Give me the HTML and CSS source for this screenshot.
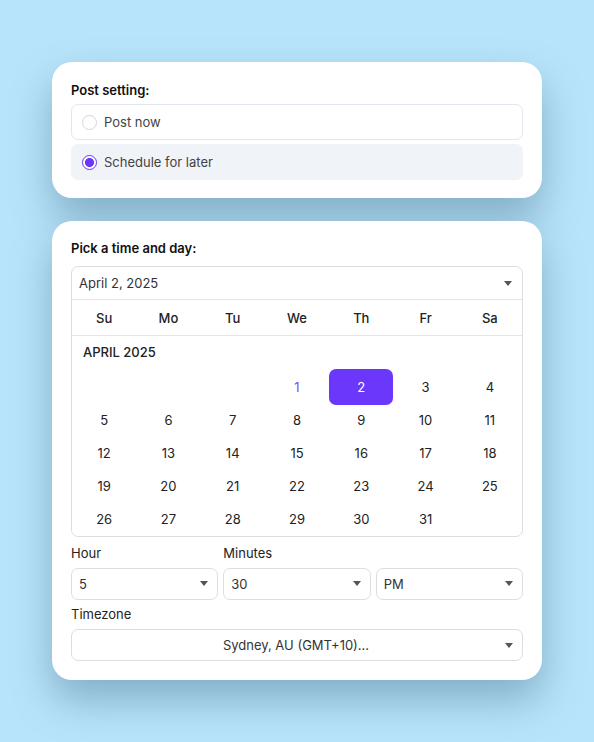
FILE: index.html
```html
<!DOCTYPE html>
<html>
<head>
<meta charset="utf-8">
<link rel="stylesheet" href="styles.css">
</head>
<body>
<div class="page">
  <section class="card card-post">
    <h2 class="title">Post setting:</h2>
    <div class="options">
      <div class="option">
        <span class="radio"></span>
        <span class="option-label">Post now</span>
      </div>
      <div class="option option-active">
        <span class="radio radio-on"></span>
        <span class="option-label">Schedule for later</span>
      </div>
    </div>
  </section>

  <section class="card card-time">
    <h2 class="title">Pick a time and day:</h2>
    <div class="picker">
      <div class="picker-head">
        <span>April 2, 2025</span>
        <span class="caret"></span>
      </div>
      <div class="weekdays">
        <span>Su</span><span>Mo</span><span>Tu</span><span>We</span><span>Th</span><span>Fr</span><span>Sa</span>
      </div>
      <div class="month">APRIL 2025</div>
      <div class="days">
        <span></span><span></span><span></span>
        <span class="day-first">1</span>
        <span class="day-selected">2</span>
        <span>3</span><span>4</span>
        <span>5</span><span>6</span><span>7</span><span>8</span><span>9</span><span>10</span><span>11</span>
        <span>12</span><span>13</span><span>14</span><span>15</span><span>16</span><span>17</span><span>18</span>
        <span>19</span><span>20</span><span>21</span><span>22</span><span>23</span><span>24</span><span>25</span>
        <span>26</span><span>27</span><span>28</span><span>29</span><span>30</span><span>31</span><span></span>
      </div>
    </div>

    <div class="time-grid">
      <div class="field">
        <label class="field-label">Hour</label>
        <div class="select"><span>5</span><span class="caret"></span></div>
      </div>
      <div class="field">
        <label class="field-label">Minutes</label>
        <div class="select"><span>30</span><span class="caret"></span></div>
      </div>
      <div class="field">
        <label class="field-label">&nbsp;</label>
        <div class="select"><span>PM</span><span class="caret"></span></div>
      </div>
    </div>

    <div class="field field-tz">
      <label class="field-label">Timezone</label>
      <div class="select select-center"><span class="tz-text">Sydney, AU (GMT+10)...</span><span class="caret"></span></div>
    </div>
  </section>
</div>
</body>
</html>
```

FILE: styles.css
```css
* { box-sizing: border-box; }
html, body {
  margin: 0;
  padding: 0;
}
body {
  background: #b8e4fb;
  font-family: Inter, "Noto Sans", sans-serif;
  color: #222;
  width: 594px;
  height: 742px;
  overflow: hidden;
}
.page {
  padding: 62px 0 0 52px;
  display: flex;
  flex-direction: column;
  gap: 23px;
}
.card {
  width: 490px;
  background: #fff;
  border-radius: 20px;
  padding: 20px 19px 18px 19px;
  box-shadow: 0 20px 40px rgba(30, 70, 100, 0.34);
}
.card-time {
  padding-top: 19px;
  padding-bottom: 19px;
}
.title {
  margin: 0;
  font-size: 13px;
  line-height: 16px;
  font-weight: 600;
  color: #111;
}
.options {
  margin-top: 6px;
  display: flex;
  flex-direction: column;
  gap: 4px;
}
.option {
  height: 36px;
  border: 1px solid #e2e6ee;
  border-radius: 7px;
  display: flex;
  align-items: center;
  padding-left: 10px;
  gap: 7px;
}
.option-active {
  background: #f0f3f8;
  border-color: #f0f3f8;
}
.option-label {
  font-size: 13px;
  color: #444;
}
.radio {
  width: 15px;
  height: 15px;
  border-radius: 50%;
  border: 1.5px solid #d4d6dc;
  background: #fff;
  flex: none;
}
.radio-on {
  border: 1.5px solid #6b38fb;
  background: radial-gradient(circle, #6b38fb 0 4.2px, #fff 4.8px);
}
.picker {
  margin-top: 10px;
  border: 1px solid #dedede;
  border-radius: 7px;
}
.picker-head {
  height: 33px;
  display: flex;
  align-items: center;
  justify-content: space-between;
  padding: 0 10px 0 7px;
  font-size: 13px;
  color: #333;
  border-bottom: 1px solid #e6e6e6;
}
.caret {
  width: 0;
  height: 0;
  border-left: 4.5px solid transparent;
  border-right: 4.5px solid transparent;
  border-top: 5px solid #555;
  flex: none;
}
.weekdays {
  height: 36px;
  display: grid;
  grid-template-columns: repeat(7, 1fr);
  align-items: center;
  text-align: center;
  font-size: 13px;
  font-weight: 500;
  color: #222;
  border-bottom: 1px solid #e6e6e6;
}
.month {
  height: 34px;
  padding: 8px 0 0 11px;
  font-size: 13px;
  font-weight: 500;
  color: #222;
}
.days {
  display: grid;
  grid-template-columns: repeat(7, 1fr);
  grid-auto-rows: 33.2px;
  font-size: 13px;
  color: #222;
}
.days span {
  display: flex;
  align-items: center;
  justify-content: center;
}
.day-first {
  color: #7b4cff;
}
.day-selected {
  background: #6b38fb;
  color: #fff;
  border-radius: 7px;
  margin: -1.5px 0;
}
.time-grid {
  margin-top: 8px;
  display: grid;
  grid-template-columns: repeat(3, 1fr);
  gap: 5px;
}
.field {
  display: flex;
  flex-direction: column;
}
.field-label {
  font-size: 13px;
  line-height: 16px;
  color: #222;
  margin-bottom: 7px;
}
.field-tz {
  margin-top: 6px;
}
.select {
  height: 32px;
  border: 1px solid #dedede;
  border-radius: 7px;
  display: flex;
  align-items: center;
  justify-content: space-between;
  padding: 0 9px 0 7px;
  font-size: 13px;
  color: #333;
}
.select-center {
  position: relative;
  justify-content: center;
}
.select-center .caret {
  position: absolute;
  right: 9px;
  top: 13px;
}
```
